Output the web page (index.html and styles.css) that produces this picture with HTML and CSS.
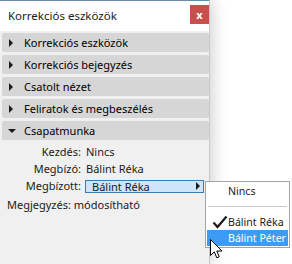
FILE: index.html
```html
<!DOCTYPE html>
<html>
<head>
<meta charset="utf-8">
<link rel="stylesheet" href="styles.css">
</head>
<body>
<div class="stage">
  <div class="panel">
    <div class="titlebar">
      <span class="title">Korrekciós eszközök</span>
      <span class="close">x</span>
    </div>
    <div class="sections">
      <div class="row"><span class="tri-r"></span><span>Korrekciós eszközök</span></div>
      <div class="row"><span class="tri-r"></span><span>Korrekciós bejegyzés</span></div>
      <div class="row"><span class="tri-r"></span><span>Csatolt nézet</span></div>
      <div class="row"><span class="tri-r"></span><span>Feliratok és megbeszélés</span></div>
      <div class="row"><span class="tri-d"></span><span>Csapatmunka</span></div>
    </div>
    <div class="fields">
      <span class="lbl">Kezdés:</span><span class="val">Nincs</span>
      <span class="lbl">Megbízó:</span><span class="val">Bálint Réka</span>
      <span class="lbl">Megbízott:</span>
      <span class="val"><span class="combo"><span>Bálint Réka</span><span class="combo-arrow"></span></span></span>
      <span class="full">Megjegyzés: módosítható</span>
    </div>
  </div>
  <div class="menu">
    <div class="item">Nincs</div>
    <div class="sep"></div>
    <div class="item"><svg class="check" width="16" height="14" viewBox="0 0 16 14"><path d="M1.5 7.5 L5.5 12 L14.5 1.5" fill="none" stroke="#1a1a1a" stroke-width="2.2"/></svg>Bálint Réka</div>
    <div class="item hl">Bálint Péter</div>
  </div>
  <svg class="cursor" width="13" height="21" viewBox="0 0 13 21"><path d="M0.5 0.5 L0.5 16.5 L4.3 12.8 L6.8 18.8 L9.2 17.8 L6.8 12 L12 12 Z" fill="#fff" stroke="#000" stroke-width="1" stroke-linejoin="miter"/></svg>
</div>
</body>
</html>
```
FILE: styles.css
```css
html, body {
  margin: 0;
  padding: 0;
  background: #ffffff;
}
body {
  font-family: "Noto Sans", "Open Sans", sans-serif;
  font-size: 11px;
  color: #000;
}
.stage {
  position: relative;
  width: 292px;
  height: 264px;
  overflow: hidden;
}
.panel {
  width: 209px;
  height: 263px;
  background: #f0f0f0;
  border-top: 1px solid #6e8ba6;
  border-right: 1px solid #c9c9c9;
  box-shadow: 3px 0 14px rgba(0,0,0,0.18);
}
.titlebar {
  height: 30px;
  background: #fff;
  display: flex;
  align-items: center;
  justify-content: space-between;
  padding-left: 8px;
  padding-right: 0;
}
.title {
  font-size: 11.5px;
  color: #1a1a1a;
  margin-top: -2px;
}
.close {
  width: 19px;
  height: 19px;
  margin-top: -3px;
  background: #c94f4f;
  color: #fff;
  font-weight: bold;
  font-size: 11px;
  display: flex;
  align-items: center;
  justify-content: center;
  line-height: 1;
}
.sections {
  display: flex;
  flex-direction: column;
  gap: 3px;
  padding: 2px 0 0 2px;
}
.row {
  height: 19px;
  background: #d6d6d6;
  border-radius: 2px;
  display: flex;
  align-items: center;
  padding-left: 7px;
  gap: 10px;
  color: #000;
}
.tri-r {
  width: 0;
  height: 0;
  border-top: 4px solid transparent;
  border-bottom: 4px solid transparent;
  border-left: 4px solid #1a1a1a;
  margin-right: 1px;
}
.tri-d {
  width: 0;
  height: 0;
  border-left: 4px solid transparent;
  border-right: 4px solid transparent;
  border-top: 4px solid #1a1a1a;
  margin-left: -1px;
  margin-right: -2px;
}
.fields {
  display: grid;
  grid-template-columns: 74px 1fr;
  column-gap: 5px;
  grid-auto-rows: 17px;
  padding: 3px 0 0 7px;
  align-items: center;
  color: #1a1a1a;
}
.lbl { text-align: right; }
.val { display: flex; align-items: center; }
.combo {
  margin-left: -1px;
  width: 111px;
  height: 11px;
  border: 1px solid #3a7bb0;
  background: #cde5f8;
  display: flex;
  align-items: center;
  justify-content: space-between;
  padding-left: 6px;
  box-sizing: content-box;
  margin-top: 1px;
}
.combo-arrow {
  width: 0;
  height: 0;
  border-top: 4px solid transparent;
  border-bottom: 4px solid transparent;
  border-left: 4px solid #1a1a1a;
  margin-right: 3px;
}
.full {
  grid-column: 1 / 3;
  margin-top: 3px;
}
.menu {
  position: absolute;
  left: 205px;
  top: 181px;
  width: 83px;
  height: 64px;
  background: #fff;
  border: 1px solid #a3a3a3;
  padding: 1px 0 0 0;
  box-sizing: content-box;
  color: #1a1a1a;
  white-space: nowrap;
  font-size: 10.6px;
}
.item {
  height: 16px;
  display: flex;
  align-items: center;
  padding-left: 22px;
  position: relative;
}
.sep {
  height: 1px;
  background: #c8c8c8;
  margin: 7px 2px 7px 2px;
}
.check {
  position: absolute;
  left: 6px;
  top: 1px;
}
.hl {
  background: #3d9bf3;
  color: #fff;
  margin-left: 1px;
  margin-right: 1px;
  padding-left: 21px;
}
.cursor {
  position: absolute;
  left: 210px;
  top: 239px;
}
```
